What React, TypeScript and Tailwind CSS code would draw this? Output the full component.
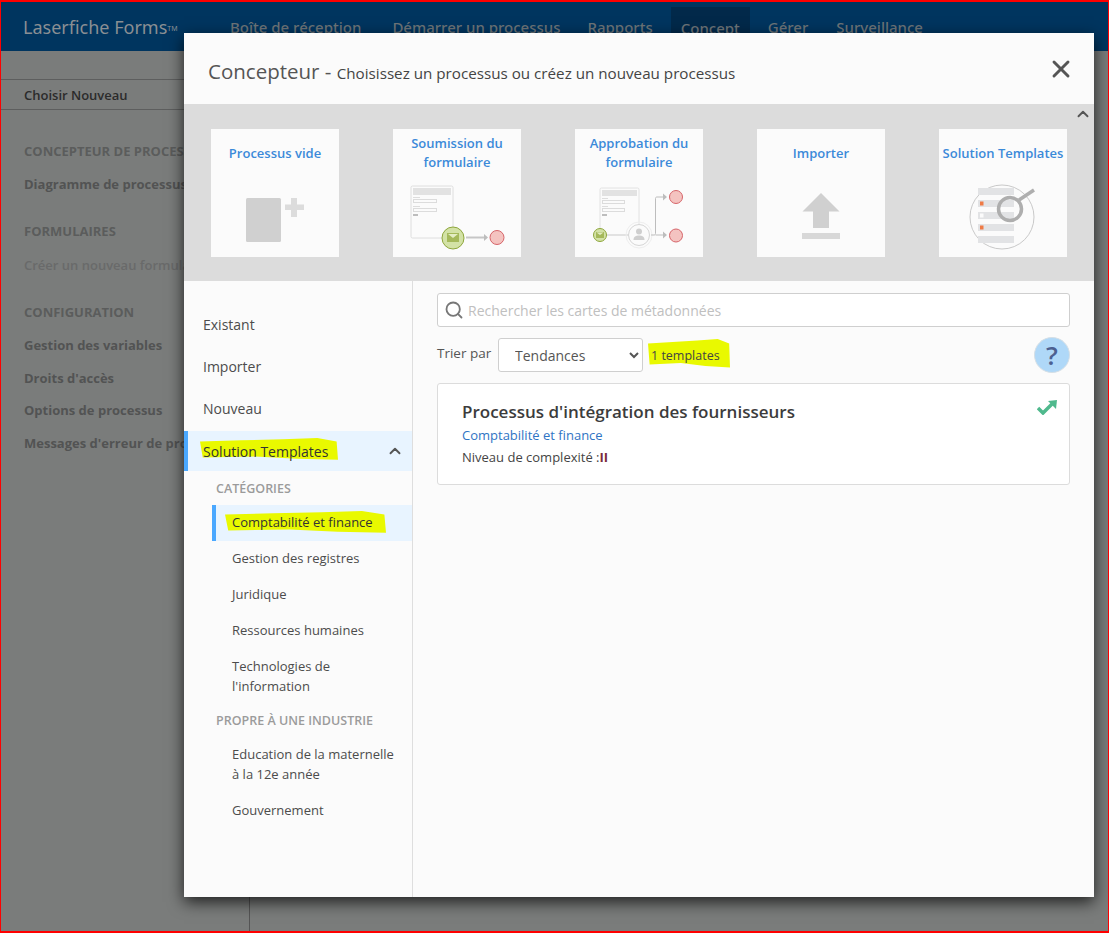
import { X, ChevronUp, Search } from "lucide-react";

const font = { fontFamily: '"Open Sans", "Noto Sans", sans-serif' };

function Hl({ className }: { className: string }) {
  // marker stroke drawn behind the text
  return (
    <svg className={`absolute ${className}`} viewBox="0 0 100 20" preserveAspectRatio="none">
      <path d="M0 3 L30 2 L60 1 L85 0 L99 3 L100 19 L70 18 L40 16 L2 17 Z" fill="#e9f900" />
    </svg>
  );
}

function BlankIcon() {
  return (
    <svg width="64" height="50" viewBox="0 0 64 50">
      <rect x="0" y="4" width="35" height="44" rx="1.5" fill="#d0d0d0" />
      <path d="M45 4h6v6.500h7v5.500h-7v7h-6v-7h-6v-5.500h6z" fill="#dcdcdc" />
    </svg>
  );
}

function SubmitIcon() {
  return (
    <svg width="98" height="66" viewBox="0 0 98 66">
      <rect x="1" y="1" width="42" height="52" rx="1.500" fill="#fbfbfb" stroke="#dedede" />
      <rect x="3" y="3" width="38" height="7" fill="#e2e2e2" />
      <rect x="3" y="12" width="7" height="1" fill="#ddd" />
      <rect x="3.500" y="14.500" width="23" height="3" fill="none" stroke="#dcdcdc" />
      <rect x="3" y="21" width="7" height="1" fill="#ddd" />
      <rect x="3.500" y="23.500" width="23" height="3" fill="none" stroke="#dcdcdc" />
      <rect x="3" y="29" width="5" height="2" fill="#bdbdbd" />
      <circle cx="43" cy="53" r="11" fill="#d3e2a6" stroke="#8ea63c" strokeWidth="1" />
      <rect x="37" y="48" width="12" height="9" fill="#a5b95a" />
      <path d="M38 49l5 4 5-4z" fill="#e4edc4" />
      <path d="M56 52.500h19" stroke="#c6c6c6" strokeWidth="2" />
      <path d="M74 49l4 3.500-4 3.500z" fill="#bdbdbd" />
      <circle cx="87" cy="52.500" r="7" fill="#f4c3c0" stroke="#d6656a" strokeWidth="1" />
    </svg>
  );
}

function ApproveIcon() {
  return (
    <svg width="96" height="66" viewBox="0 0 96 66">
      <rect x="9" y="1" width="39" height="47" rx="1.500" fill="#fbfbfb" stroke="#e2e2e2" />
      <rect x="11" y="3" width="35" height="6" fill="#e2e2e2" />
      <rect x="11" y="11" width="6" height="1" fill="#ddd" />
      <rect x="11.500" y="13.500" width="22" height="3" fill="none" stroke="#dcdcdc" />
      <rect x="11" y="19" width="6" height="1" fill="#ddd" />
      <rect x="11.500" y="21.500" width="22" height="3" fill="none" stroke="#dcdcdc" />
      <rect x="11" y="27" width="5" height="2" fill="#bdbdbd" />
      <path d="M14 48h26" stroke="#e2e2e2" strokeWidth="2" />
      <circle cx="9" cy="48" r="6.500" fill="#d3e2a6" stroke="#8ea63c" />
      <rect x="5" y="45" width="8" height="6" fill="#a5b95a" />
      <path d="M5.500 45.500l3.500 2.500 3.500-2.500z" fill="#e4edc4" />
      <circle cx="48" cy="48" r="13" fill="none" stroke="#eeeeee" />
      <circle cx="48" cy="48" r="10.500" fill="#fbfbfb" stroke="#d6d6d6" />
      <circle cx="48" cy="44.500" r="3" fill="#cfcfcf" />
      <path d="M42.500 53c0-3.500 2.500-4.500 5.500-4.500s5.500 1 5.500 4.500z" fill="#cfcfcf" />
      <path d="M60 48h3c1 0 1.500-.5 1.500-1.500V11.500c0-1 .5-1.500 1.500-1.500h7M64.500 48h8" stroke="#bdbdbd" strokeWidth="1" fill="none" />
      <path d="M72 6.500l4 3.500-4 3.500zM72 44.500l4 3.500-4 3.500z" fill="#bdbdbd" />
      <circle cx="85" cy="10" r="6.500" fill="#f4c3c0" stroke="#d6656a" />
      <circle cx="85" cy="48.500" r="6.500" fill="#f4c3c0" stroke="#d6656a" />
    </svg>
  );
}

function ImportIcon() {
  return (
    <svg width="38" height="46" viewBox="0 0 38 46">
      <path d="M19 0L37.500 18.500H27V35H11V18.500H.5z" fill="#d0d0d0" />
      <rect x="0" y="40" width="38" height="6" fill="#d8d8d8" />
    </svg>
  );
}

function TemplatesIcon() {
  return (
    <svg width="68" height="66" viewBox="0 0 68 66">
      <circle cx="33" cy="33" r="32" fill="#fbfbfb" stroke="#c9c9c9" />
      <rect x="9" y="4" width="36" height="7" fill="#e2e3e5" />
      <rect x="9" y="16" width="36" height="7" fill="#e2e3e5" />
      <rect x="11" y="17.500" width="3.500" height="4" fill="#ef7b46" />
      <rect x="9" y="28" width="36" height="7" fill="#e2e3e5" />
      <rect x="11" y="29.500" width="3.500" height="4" fill="#fbfbfb" />
      <rect x="9" y="40" width="36" height="7" fill="#e2e3e5" />
      <rect x="11" y="41.500" width="3.500" height="4" fill="#ef7b46" />
      <rect x="9" y="52" width="36" height="7" fill="#e2e3e5" />
      <circle cx="41" cy="25" r="11.500" fill="none" stroke="#aeaeae" strokeWidth="3.500" />
      <path d="M50 16L65 6" stroke="#aeaeae" strokeWidth="3.500" />
    </svg>
  );
}

function Card({ lines, icon, pad }: { lines: string[]; icon: React.ReactNode; pad: string }) {
  return (
    <div className="w-[128px] h-[128px] bg-[#fbfbfb] flex flex-col items-center">
      <div className={`text-[13px] leading-[19px] font-semibold text-[#3b8ad9] text-center whitespace-nowrap ${lines.length === 1 ? "mt-[15px] h-[19px]" : "mt-[5px] h-[38px]"}`}>
        {lines.map((l) => (
          <div key={l}>{l}</div>
        ))}
      </div>
      <div className={`flex-1 flex justify-center ${pad}`}>{icon}</div>
    </div>
  );
}

function SubItem({ lines }: { lines: string[] }) {
  return (
    <div className="pl-[48px] pr-2 py-[8px] text-[13px] leading-[20px] text-[#4c4c4c]">
      {lines.map((l) => (
        <div key={l} className="whitespace-nowrap">{l}</div>
      ))}
    </div>
  );
}

export default function App() {
  return (
    <div style={font} className="relative w-[1109px] h-[933px] overflow-hidden bg-[#7a7c7b] border-x border-t-2 border-b-2 border-[#ff0000] flex flex-col">
      {/* page behind the overlay */}
      <div className="h-[49px] pt-[2px] bg-[#00355f] flex items-center shrink-0">
        <div style={{ fontFamily: '"Noto Sans", sans-serif' }} className="ml-[22px] w-[207px] text-[18px] text-[#8a8f93] whitespace-nowrap">
          Laserfiche Forms<sup className="text-[7px]">TM</sup>
        </div>
        <div style={{ fontFamily: '"Noto Sans", sans-serif' }} className="flex items-center text-[15px] font-medium text-[#6d7478] whitespace-nowrap">
          <span className="mr-[31px]">Boîte de réception</span>
          <span className="mr-[27px]">Démarrer un processus</span>
          <span className="mr-[18px]">Rapports</span>
          <span className="mr-[18px] bg-[#02294a] px-[10px] leading-[42px]">Concept</span>
          <span className="mr-[28px]">Gérer</span>
          <span>Surveillance</span>
        </div>
      </div>
      <div className="flex-1 flex">
        <div className="w-[249px] border-r border-[#555] shrink-0 text-[13px] font-bold text-[#525353]">
          <div className="w-[183px] overflow-hidden whitespace-nowrap">
            <div className="mt-[28px] h-[31px] border-y border-[#5d5e5e] pl-[23px] font-semibold text-[#2b2b2b] leading-[31px]">Choisir Nouveau</div>
            <div className="pl-[23px] pt-[31px] text-[#5b5c5c] leading-[20px]">CONCEPTEUR DE PROCESSUS</div>
            <div className="pl-[23px] pt-[13px] leading-[20px]">Diagramme de processus</div>
            <div className="pl-[23px] pt-[27px] text-[#5b5c5c] leading-[20px]">FORMULAIRES</div>
            <div className="pl-[23px] pt-[14px] text-[#696a6a] leading-[20px] font-semibold">Créer un nouveau formulaire</div>
            <div className="pl-[23px] pt-[27px] text-[#5b5c5c] leading-[20px]">CONFIGURATION</div>
            <div className="pl-[23px] pt-[13px] leading-[20px]">Gestion des variables</div>
            <div className="pl-[23px] pt-[13px] leading-[20px]">Droits d'accès</div>
            <div className="pl-[23px] pt-[12px] leading-[20px]">Options de processus</div>
            <div className="pl-[23px] pt-[13px] leading-[20px]">Messages d'erreur de processus</div>
          </div>
        </div>
      </div>

      {/* modal */}
      <div className="absolute left-[183px] top-[31px] w-[910px] h-[864px] bg-[#fbfbfb] flex flex-col shadow-[0_5px_15px_rgba(0,0,0,0.75)]">
        <div className="h-[71px] shrink-0 flex items-center justify-between pl-[24px] pr-[19px] text-[#444]">
          <div className="whitespace-nowrap pt-[6px]">
            <span className="text-[20.500px] text-[#555]">Concepteur - </span>
            <span className="text-[15.200px] font-medium text-[#444]">Choisissez un processus ou créez un nouveau processus</span>
          </div>
          <X size={28} strokeWidth={2.500} className="text-[#555]" />
        </div>
        <div className="relative h-[177px] shrink-0 bg-[#dcdcdc] flex items-start gap-[54px] pl-[27px] pt-[25px]">
          <Card lines={["Processus vide"]} pad="pt-[31px] pl-[6px]" icon={<BlankIcon />} />
          <Card lines={["Soumission du", "formulaire"]} pad="pt-[13px] pl-[4px]" icon={<SubmitIcon />} />
          <Card lines={["Approbation du", "formulaire"]} pad="pt-[15px]" icon={<ApproveIcon />} />
          <Card lines={["Importer"]} pad="pt-[30px]" icon={<ImportIcon />} />
          <Card lines={["Solution Templates"]} pad="pt-[21px]" icon={<TemplatesIcon />} />
          <ChevronUp size={18} strokeWidth={2.500} className="absolute right-[2px] top-[1px] text-[#555]" />
        </div>
        <div className="flex-1 flex min-h-0">
          {/* left nav */}
          <div className="w-[229px] shrink-0 border-r border-[#dedede] pt-[34px]">
            <div className="pl-[19px] h-[42px] text-[14px] leading-[20px] text-[#4c4c4c]">Existant</div>
            <div className="pl-[19px] h-[42px] text-[14px] leading-[20px] text-[#4c4c4c]">Importer</div>
            <div className="pl-[19px] h-[32px] text-[14px] leading-[20px] text-[#4c4c4c]">Nouveau</div>
            <div className="h-[40px] bg-[#e8f4ff] border-l-4 border-[#4aa8ff] flex items-center justify-between pl-[15px] pr-[8px] text-[14px] font-medium text-[#333]">
              <span className="relative whitespace-nowrap">
                <Hl className="-left-[3px] -top-[3px] w-[138px] h-[23px]" />
                <span className="relative">Solution Templates</span>
              </span>
              <ChevronUp size={18} strokeWidth={2.500} className="text-[#555]" />
            </div>
            <div className="pl-[32px] pt-[8px] pb-[6px] text-[12.500px] leading-[20px] font-semibold text-[#9b9b9b]">CATÉGORIES</div>
            <div className="ml-[28px] mb-[-1px] h-[36px] bg-[#e8f4ff] border-l-4 border-[#4aa8ff] flex items-center pl-[16px] text-[13px] font-medium text-[#333]">
              <span className="relative whitespace-nowrap">
                <Hl className="-left-[7px] -top-[2px] w-[161px] h-[23px]" />
                <span className="relative">Comptabilité et finance</span>
              </span>
            </div>
            <SubItem lines={["Gestion des registres"]} />
            <SubItem lines={["Juridique"]} />
            <SubItem lines={["Ressources humaines"]} />
            <SubItem lines={["Technologies de", "l'information"]} />
            <div className="pl-[32px] pt-[7px] pb-[5px] text-[12.500px] leading-[20px] font-semibold text-[#9b9b9b]">PROPRE À UNE INDUSTRIE</div>
            <SubItem lines={["Education de la maternelle", "à la 12e année"]} />
            <SubItem lines={["Gouvernement"]} />
          </div>

          {/* right pane */}
          <div className="flex-1 pl-[24px] pr-[24px] pt-[12px]">
            <div className="h-[34px] border border-[#cfcfcf] rounded-[3px] bg-white flex items-center pl-[6px] gap-[4px]">
              <Search size={20} strokeWidth={2.200} className="text-[#777]" />
              <span className="text-[14px] text-[#c0c0c0] whitespace-nowrap">Rechercher les cartes de métadonnées</span>
            </div>
            <div className="mt-[11px] h-[34px] flex items-center">
              <span className="text-[13.500px] text-[#555] w-[61px] whitespace-nowrap pb-[4px]">Trier par</span>
              <select style={font} defaultValue="Tendances" className="w-[145px] h-[34px] border border-[#cfcfcf] rounded-[3px] bg-white pl-[12px] text-[14px] text-[#555]">
                <option>Tendances</option>
              </select>
              <span className="relative ml-[8px] mt-[2px] text-[12.500px] text-[#444] whitespace-nowrap">
                <Hl className="-left-[3px] -top-[8px] w-[82px] h-[30px]" />
                <span className="relative">1 templates</span>
              </span>
              <span className="ml-auto w-[36px] h-[36px] rounded-full bg-[#afd8f8] border border-[#d5dfe6] flex items-center justify-center text-[26px] font-semibold text-[#4c6091]">?</span>
            </div>
            <div className="relative mt-[11px] h-[102px] border border-[#dcdcdc] rounded-[3px] bg-white pl-[24px] pt-[16px]">
              <div className="text-[17px] leading-[24px] font-semibold text-[#3c3c3c] whitespace-nowrap">Processus d'intégration des fournisseurs</div>
              <div className="text-[13px] leading-[20px] mt-[1px] text-[#2f74c4]">Comptabilité et finance</div>
              <div className="text-[13px] leading-[20px] mt-[2px] text-[#444]">
                Niveau de complexité :<span className="font-bold text-[#7a2a3a]">II</span>
              </div>
              <svg className="absolute right-[12px] top-[15px]" width="20" height="16" viewBox="0 0 20 16">
                <path d="M1 9l5 5 9-9" fill="none" stroke="#4fb98d" strokeWidth="3.500" />
                <path d="M11 2l9-1-1 9z" fill="#4fb98d" />
              </svg>
            </div>
          </div>
        </div>
      </div>
    </div>
  );
}
